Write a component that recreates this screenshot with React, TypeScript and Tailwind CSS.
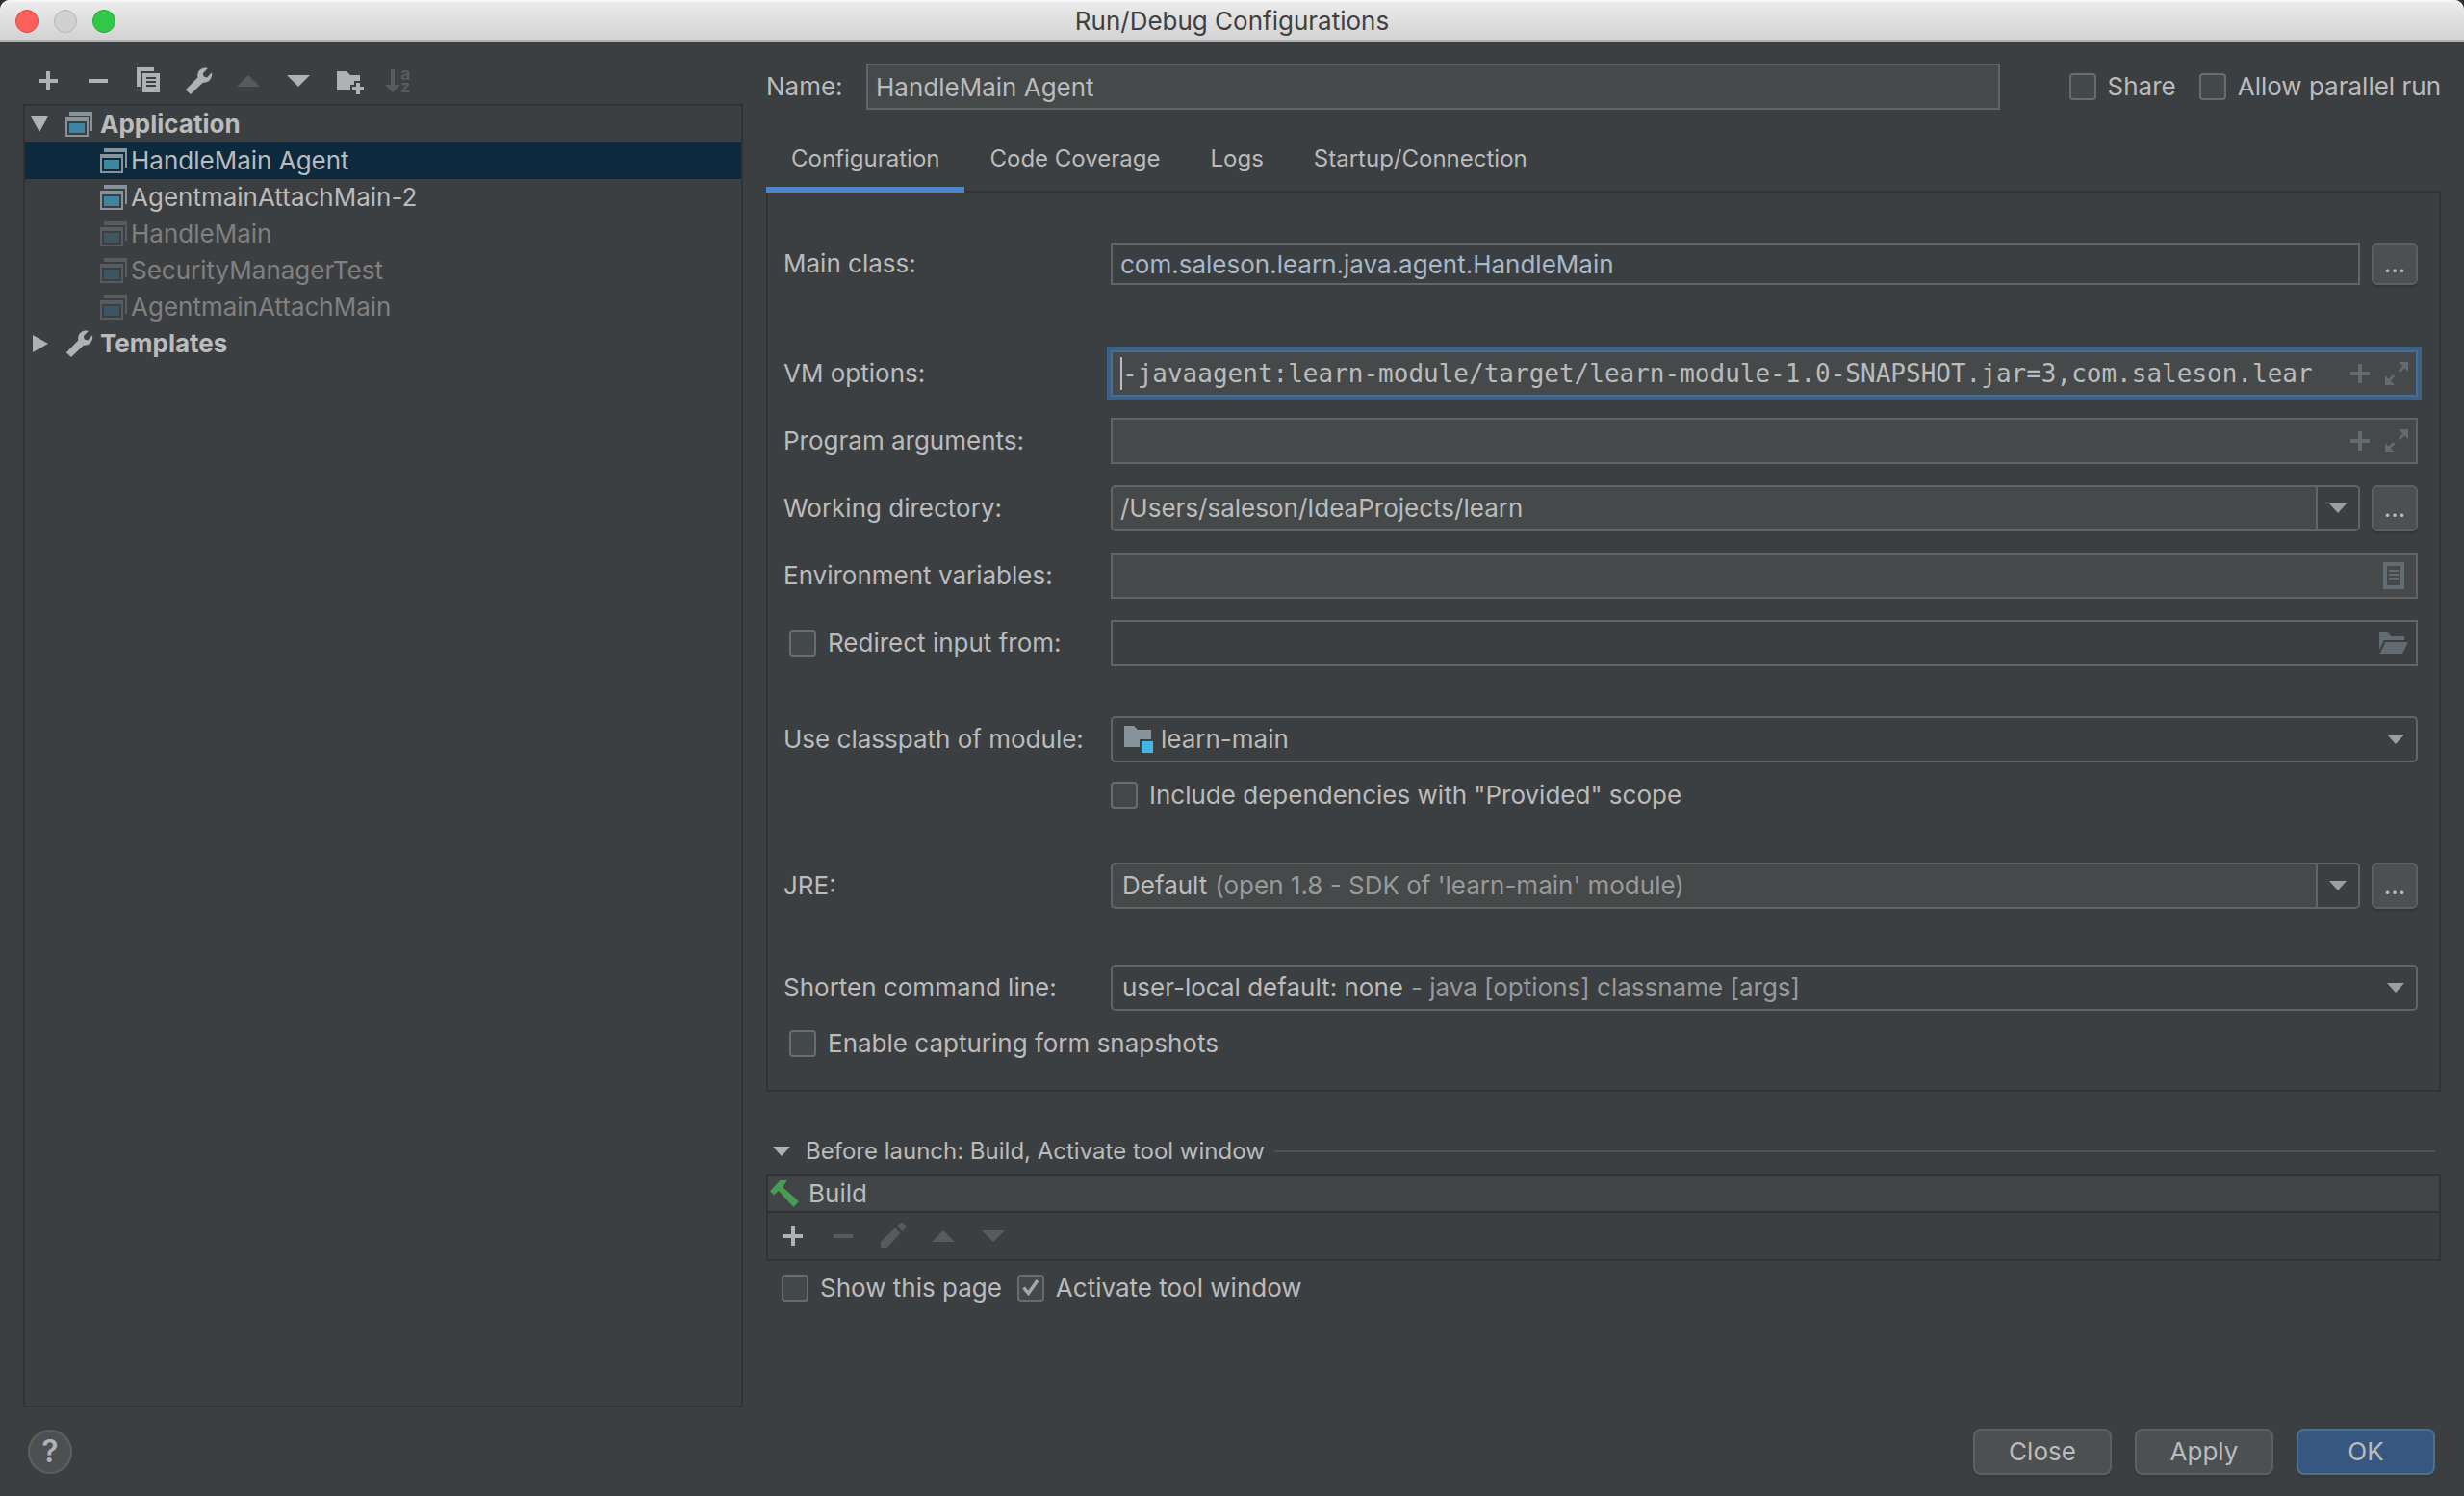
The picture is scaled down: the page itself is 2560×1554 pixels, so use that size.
import { useState } from "react";
import type { ReactNode } from "react";

interface RunConfig {
  name: string;
  saved: boolean;
}

const configs: RunConfig[] = [
  { name: "HandleMain Agent", saved: true },
  { name: "AgentmainAttachMain-2", saved: true },
  { name: "HandleMain", saved: false },
  { name: "SecurityManagerTest", saved: false },
  { name: "AgentmainAttachMain", saved: false },
];

const tabs = ["Configuration", "Code Coverage", "Logs", "Startup/Connection"];

/* ---------- Icons ---------- */

function Icon({ children }: { children: ReactNode }) {
  return (
    <svg viewBox="0 0 32 32" className="block size-8 overflow-visible fill-current" aria-hidden="true">
      {children}
    </svg>
  );
}

const PlusIcon = () => <Icon><path d="M14 6h4v8h8v4h-8v8h-4v-8H6v-4h8z" /></Icon>;
const MinusIcon = () => <Icon><path d="M6 14h20v4H6z" /></Icon>;
const UpIcon = () => <Icon><path d="M16 10l12 12H4z" /></Icon>;
const DownIcon = () => <Icon><path d="M4 10h24L16 22z" /></Icon>;
const CopyIcon = () => (
  <Icon>
    <path d="M4 2h18v4H8v16H4z" />
    <path fillRule="evenodd" d="M10 8h18v20H10zM14 12v2h10v-2zM14 16v2h10v-2zM14 20v2h10v-2z" />
  </Icon>
);
const WrenchIcon = () => (
  <Icon>
    <path d="M25.8 3L20.8 8.2l.9 3.4 3.4.9 4.9-5.2C31.2 13 27 18.3 20.8 17.8L8 30l-5.2-4.8L15.4 12.4C14.2 6 19.6 1.2 25.8 3z" />
  </Icon>
);
const NewFolderIcon = () => (
  <Icon>
    <path d="M4 6h10l4 4h10v6h-6v4h-4v6H4z" />
    <path d="M24 18h4v4h4v4h-4v4h-4v-4h-4v-4h4z" />
  </Icon>
);
const SortIcon = () => (
  <Icon>
    <path d="M8 4h4v16h6l-8 8-8-8h6z" />
    <text className="text-[18px] font-bold">
      <tspan x="18" y="15">a</tspan>
      <tspan x="18" y="28">z</tspan>
    </text>
  </Icon>
);
const PencilIcon = () => (
  <Icon>
    <path d="M3 22L18 7.5l5.5 5.5L9.5 28H3z" />
    <path d="M20.2 5.5L24 2q1-.6 2 .2l3 3.3q.6 1 0 2L25.500 11z" />
  </Icon>
);

function AppIcon() {
  return (
    <svg viewBox="0 0 28 26" className="block h-[26px] w-7 shrink-0" aria-hidden="true">
      <path d="M4 0h24v20h-2V4H4z" fill="#87939a" />
      <path fillRule="evenodd" d="M0 6h24v20H0zM2 10v14h20V10z" fill="#87939a" />
      <path d="M4 12h16v10H4z" fill="#3e86a0" />
    </svg>
  );
}

function HammerIcon() {
  return (
    <svg viewBox="0 0 30 28" className="block h-7 w-[30px]" fill="#499c54" aria-hidden="true">
      <path d="M0 11.3L10.5 0h7.3l-4.4 7.3L30 22l-5.5 6L8.9 11 4 15.3z" />
    </svg>
  );
}

function ModuleIcon() {
  return (
    <svg viewBox="0 0 30 28" className="block h-7 w-[30px] shrink-0" aria-hidden="true">
      <path d="M0 0h10l4 4h14v10H16v8H0z" fill="#87939a" />
      <path d="M18 16h12v12H18z" fill="#40b6e0" />
    </svg>
  );
}

function ExpandIcon() {
  return (
    <svg viewBox="0 0 24 24" className="block size-6 fill-current" aria-hidden="true">
      <path d="M14 0h10v10l-3.700-3.700-4.600 4.600-2-2 4.600-4.600z" />
      <path d="M10 24H0V14l3.700 3.700 4.600-4.600 2 2-4.600 4.600z" />
    </svg>
  );
}

function ListIcon() {
  return (
    <svg viewBox="0 0 22 28" className="block h-7 w-[22px] fill-current" aria-hidden="true">
      <path fillRule="evenodd" d="M0 0h22v28H0zM4 4v20h14V4z" />
      <path d="M6 8h10v2H6zM6 12h10v2H6zM6 16h10v2H6z" />
    </svg>
  );
}

function OpenFolderIcon() {
  return (
    <svg viewBox="0 0 30 22" className="block h-[22px] w-[30px] fill-current" aria-hidden="true">
      <path d="M0 0h9l3 4h14v4H5L0 18z" />
      <path d="M6.5 10H30l-6 12H.6z" />
    </svg>
  );
}

function ArrowDown() {
  return (
    <svg viewBox="0 0 18 10" className="pointer-events-none block h-[10px] w-[18px] shrink-0" fill="#9c9fa2" aria-hidden="true">
      <path d="M0 0h18L9 10z" />
    </svg>
  );
}

/* ---------- Controls ---------- */

function ToolButton({ label, disabled, children }: { label: string; disabled?: boolean; children: ReactNode }) {
  return (
    <button type="button" aria-label={label} disabled={disabled} className="text-[#afb1b3] disabled:text-[#5a5a5a]">
      {children}
    </button>
  );
}

function Checkbox({ label, checked = false }: { label: string; checked?: boolean }) {
  return (
    <label className="flex h-7 items-center gap-3 whitespace-nowrap">
      <span className="grid size-7 shrink-0">
        <input
          type="checkbox"
          defaultChecked={checked}
          className="peer col-start-1 row-start-1 size-7 appearance-none rounded-[4px] border-2 border-[#6b6b6b] bg-[#43494a]"
        />
        <svg
          viewBox="0 0 28 28"
          className="pointer-events-none invisible col-start-1 row-start-1 size-7 peer-checked:visible"
          fill="none"
          stroke="#a7a7a7"
          strokeWidth="3.5"
          aria-hidden="true"
        >
          <path d="M6.5 13.500l5 6L21 6" />
        </svg>
      </span>
      {label}
    </label>
  );
}

function BrowseButton({ label, height = "h-12" }: { label: string; height?: string }) {
  return (
    <button
      type="button"
      aria-label={label}
      className={`${height} w-12 shrink-0 rounded-[6px] border-2 border-[#5e6060] bg-[#4c5052] shadow-[0_3px_0_#36393a]`}
    >
      ...
    </button>
  );
}

function FieldButton({ label, children }: { label: string; children: ReactNode }) {
  return (
    <button type="button" aria-label={label} className="text-[#616b70]">
      {children}
    </button>
  );
}

function Row({ id, label, className, children }: { id: string; label: string; className: string; children: ReactNode }) {
  return (
    <div className={`flex items-center ${className}`}>
      <label htmlFor={id} className="w-85 shrink-0">{label}</label>
      <div className="flex min-w-0 flex-1 items-center gap-3">{children}</div>
    </div>
  );
}

function DialogButton({ label, primary }: { label: string; primary?: boolean }) {
  return (
    <button
      type="button"
      className={`h-12 w-36 rounded-[8px] border-2 shadow-[0_3px_0_#36393a] ${
        primary ? "border-[#4c708c] bg-[#365880]" : "border-[#5e6060] bg-[#4c5052]"
      }`}
    >
      {label}
    </button>
  );
}

/* ---------- Sections ---------- */

function TitleBar() {
  return (
    <header className="grid h-11 grid-cols-[1fr_auto_1fr] items-center rounded-t-[10px] border-b-2 border-[#b1b1b1] bg-linear-to-b from-[#ededed] to-[#d2d2d2] px-4 pt-[2px] shadow-[inset_0_2px_0_#f6f6f6]">
      <div className="flex gap-4">
        <button type="button" aria-label="Close window" className="size-6 rounded-full border border-[#e2463f] bg-[#fc605c]" />
        <button type="button" aria-label="Minimize window" disabled className="size-6 rounded-full border border-[#b5b5b5] bg-[#d0d0d0]" />
        <button type="button" aria-label="Zoom window" className="size-6 rounded-full border border-[#1dad2b] bg-[#34c84a]" />
      </div>
      <h1 className="text-[#404040]">Run/Debug Configurations</h1>
    </header>
  );
}

function Sidebar() {
  const [selected, setSelected] = useState("HandleMain Agent");

  return (
    <aside className="flex w-[748px] shrink-0 flex-col pt-6">
      <div className="flex gap-5 px-[10px] pb-2">
        <ToolButton label="Add"><PlusIcon /></ToolButton>
        <ToolButton label="Remove"><MinusIcon /></ToolButton>
        <ToolButton label="Copy"><CopyIcon /></ToolButton>
        <ToolButton label="Edit templates"><WrenchIcon /></ToolButton>
        <ToolButton label="Move up" disabled><UpIcon /></ToolButton>
        <ToolButton label="Move down"><DownIcon /></ToolButton>
        <ToolButton label="New folder"><NewFolderIcon /></ToolButton>
        <ToolButton label="Sort" disabled><SortIcon /></ToolButton>
      </div>

      <div className="flex-1 border-2 border-[#323232]">
        <button type="button" className="flex h-[38px] w-full items-center pl-[6px] font-bold">
          <svg viewBox="0 0 18 16" className="mr-[18px] h-4 w-[18px]" fill="#afb1b3" aria-hidden="true">
            <path d="M0 0h18L9 16z" />
          </svg>
          <AppIcon />
          <span className="ml-2">Application</span>
        </button>
        <ul>
          {configs.map((config) => (
            <li key={config.name}>
              <button
                type="button"
                onClick={() => setSelected(config.name)}
                className={`flex h-[38px] w-full items-center gap-1 pl-[78px] ${
                  selected === config.name ? "bg-[#0d293e]" : ""
                } ${config.saved ? "" : "text-[#808080]"}`}
              >
                <span className={config.saved ? "" : "opacity-35"}><AppIcon /></span>
                {config.name}
              </button>
            </li>
          ))}
        </ul>
        <button type="button" className="flex h-[38px] w-full items-center pl-2 font-bold">
          <svg viewBox="0 0 16 18" className="mr-4 h-[18px] w-4" fill="#afb1b3" aria-hidden="true">
            <path d="M0 0l16 9-16 9z" />
          </svg>
          <span className="text-[#afb1b3]"><WrenchIcon /></span>
          <span className="ml-[6px]">Templates</span>
        </button>
      </div>
    </aside>
  );
}

function ConfigurationForm() {
  const field = "flex h-12 min-w-0 flex-1 items-center border-2 border-[#646464]";

  return (
    <form className="flex flex-col border-2 border-t-0 border-[#323232] pt-[52px] pr-[22px] pb-[34px] pl-4">
      <Row id="main-class" label="Main class:" className="">
        <input
          id="main-class"
          defaultValue="com.saleson.learn.java.agent.HandleMain"
          className="h-11 min-w-0 flex-1 border-2 border-[#646464] bg-transparent px-2 text-[#a9b7c6] outline-none"
        />
        <BrowseButton label="Browse main class" height="h-11" />
      </Row>

      <Row id="vm-options" label="VM options:" className="mt-[68px]">
        <div className="flex h-12 min-w-0 flex-1 items-center gap-4 border-2 border-[#466d94] bg-[#45494a] px-2 shadow-[0_0_0_4px_#3d6185]">
          <div className="flex min-w-0 flex-1 items-center">
            <span className="h-[34px] w-[2px] shrink-0 bg-[#bbbbbb]" />
            <input
              id="vm-options"
              defaultValue="-javaagent:learn-module/target/learn-module-1.0-SNAPSHOT.jar=3,com.saleson.lear"
              className="min-w-0 flex-1 bg-transparent font-['DejaVu_Sans_Mono',monospace] outline-none"
            />
          </div>
          <div className="flex items-center gap-[10px]">
            <FieldButton label="Insert macro in VM options"><PlusIcon /></FieldButton>
            <FieldButton label="Expand VM options"><ExpandIcon /></FieldButton>
          </div>
        </div>
      </Row>

      <Row id="program-arguments" label="Program arguments:" className="mt-[22px]">
        <div className={`${field} gap-[10px] bg-[#45494a] px-2`}>
          <input id="program-arguments" className="min-w-0 flex-1 bg-transparent outline-none" />
          <FieldButton label="Insert macro in program arguments"><PlusIcon /></FieldButton>
          <FieldButton label="Expand program arguments"><ExpandIcon /></FieldButton>
        </div>
      </Row>

      <Row id="working-directory" label="Working directory:" className="mt-[22px]">
        <div className={`${field} rounded-[5px] bg-[#45494a]`}>
          <input
            id="working-directory"
            defaultValue="/Users/saleson/IdeaProjects/learn"
            className="min-w-0 flex-1 bg-transparent px-2 outline-none"
          />
          <button
            type="button"
            aria-label="Recent directories"
            className="flex h-full w-11 items-center justify-center rounded-r-[3px] border-l-2 border-[#646464] bg-[#3c3f41]"
          >
            <ArrowDown />
          </button>
        </div>
        <BrowseButton label="Browse working directory" />
      </Row>

      <Row id="environment-variables" label="Environment variables:" className="mt-[22px]">
        <div className={`${field} bg-[#45494a] pr-3 pl-2`}>
          <input id="environment-variables" className="min-w-0 flex-1 bg-transparent outline-none" />
          <FieldButton label="Edit environment variables"><ListIcon /></FieldButton>
        </div>
      </Row>

      <div className="mt-[22px] flex items-center">
        <div className="w-85 shrink-0 pl-[6px]">
          <Checkbox label="Redirect input from:" />
        </div>
        <div className={`${field} px-2`}>
          <input aria-label="Redirect input file" className="min-w-0 flex-1 bg-transparent outline-none" />
          <FieldButton label="Browse input file"><OpenFolderIcon /></FieldButton>
        </div>
      </div>

      <Row id="module" label="Use classpath of module:" className="mt-[52px]">
        <div className={`${field} gap-2 rounded-[5px] px-3`}>
          <ModuleIcon />
          <select id="module" className="min-w-0 flex-1 appearance-none bg-transparent outline-none">
            <option>learn-main</option>
          </select>
          <ArrowDown />
        </div>
      </Row>
      <div className="mt-5 pl-85">
        <Checkbox label={'Include dependencies with "Provided" scope'} />
      </div>

      <Row id="jre" label="JRE:" className="mt-14">
        <div className={`${field} rounded-[5px] bg-[#45494a]`}>
          <select id="jre" className="field-sizing-content appearance-none bg-transparent pl-[10px] outline-none">
            <option>Default</option>
          </select>
          <label htmlFor="jre" className="min-w-0 flex-1 truncate pl-2 text-[#999999]">
            (open 1.8 - SDK of 'learn-main' module)
          </label>
          <span className="flex h-full w-11 items-center justify-center rounded-r-[3px] border-l-2 border-[#646464] bg-[#3c3f41]">
            <ArrowDown />
          </span>
        </div>
        <BrowseButton label="Browse JRE" />
      </Row>

      <Row id="shorten" label="Shorten command line:" className="mt-[58px]">
        <div className={`${field} rounded-[5px] pr-3`}>
          <select id="shorten" className="field-sizing-content appearance-none bg-transparent pl-[10px] outline-none">
            <option>user-local default: none</option>
          </select>
          <label htmlFor="shorten" className="min-w-0 flex-1 truncate pl-2 text-[#999999]">
            - java [options] classname [args]
          </label>
          <ArrowDown />
        </div>
      </Row>
      <div className="mt-5 pl-[6px]">
        <Checkbox label="Enable capturing form snapshots" />
      </div>
    </form>
  );
}

function BeforeLaunch() {
  return (
    <section className="pt-11">
      <div className="flex h-9 items-center pr-[6px] pl-[7px] text-[24px]">
        <button type="button" className="flex items-center gap-4">
          <svg viewBox="0 0 18 10" className="h-[10px] w-[18px]" fill="#afb1b3" aria-hidden="true">
            <path d="M0 0h18L9 10z" />
          </svg>
          Before launch: Build, Activate tool window
        </button>
        <hr className="ml-[10px] flex-1 border-t-2 border-[#515151]" />
      </div>

      <div className="mt-[6px] border-2 border-[#323232]">
        <div className="flex h-9 items-center gap-[10px] bg-[#414547] pl-[2px]">
          <HammerIcon />
          Build
        </div>
        <div className="flex h-[50px] items-center gap-5 border-t-2 border-[#323232] px-[10px]">
          <ToolButton label="Add task"><PlusIcon /></ToolButton>
          <ToolButton label="Remove task" disabled><MinusIcon /></ToolButton>
          <ToolButton label="Edit task" disabled><PencilIcon /></ToolButton>
          <ToolButton label="Move task up" disabled><UpIcon /></ToolButton>
          <ToolButton label="Move task down" disabled><DownIcon /></ToolButton>
        </div>
      </div>

      <div className="mt-[14px] flex gap-4 pl-4">
        <Checkbox label="Show this page" />
        <Checkbox label="Activate tool window" checked />
      </div>
    </section>
  );
}

export default function App() {
  const [activeTab, setActiveTab] = useState("Configuration");

  return (
    <div className="flex min-h-screen flex-col bg-[#2b2d2e] font-[Inter,'Liberation_Sans',sans-serif] text-[26px] leading-8 text-[#bbbbbb]">
      <TitleBar />
      <div className="flex flex-1 flex-col bg-[#3c3f41]">
        <main className="flex flex-1 gap-6 px-6">
          <Sidebar />

          <div className="flex min-w-0 flex-1 flex-col pt-[22px]">
            <div className="flex items-center">
              <label htmlFor="config-name" className="w-26 shrink-0">Name:</label>
              <input
                id="config-name"
                defaultValue="HandleMain Agent"
                className="h-12 min-w-0 flex-1 border-2 border-[#646464] bg-[#45494a] px-2 outline-none"
              />
              <div className="ml-[72px] flex gap-6">
                <Checkbox label="Share" />
                <Checkbox label="Allow parallel run" />
              </div>
            </div>

            <nav className="mt-4 flex h-[70px] border-b-2 border-[#323232] text-[24px]">
              {tabs.map((tab) => (
                <button
                  key={tab}
                  type="button"
                  onClick={() => setActiveTab(tab)}
                  className={`-mb-[2px] border-b-6 px-[26px] pt-[6px] ${
                    activeTab === tab ? "border-[#4a88c7]" : "border-transparent"
                  }`}
                >
                  {tab}
                </button>
              ))}
            </nav>
            <ConfigurationForm />
            <BeforeLaunch />
          </div>
        </main>

        <footer className="flex items-center gap-6 py-[22px] pr-[30px] pl-[29px]">
          <button
            type="button"
            aria-label="Help"
            className="mr-auto size-[46px] rounded-full border-2 border-[#5e6060] bg-[#4c5052] text-[32px] font-semibold text-[#afb1b3]"
          >
            ?
          </button>
          <DialogButton label="Close" />
          <DialogButton label="Apply" />
          <DialogButton label="OK" primary />
        </footer>
      </div>
    </div>
  );
}
